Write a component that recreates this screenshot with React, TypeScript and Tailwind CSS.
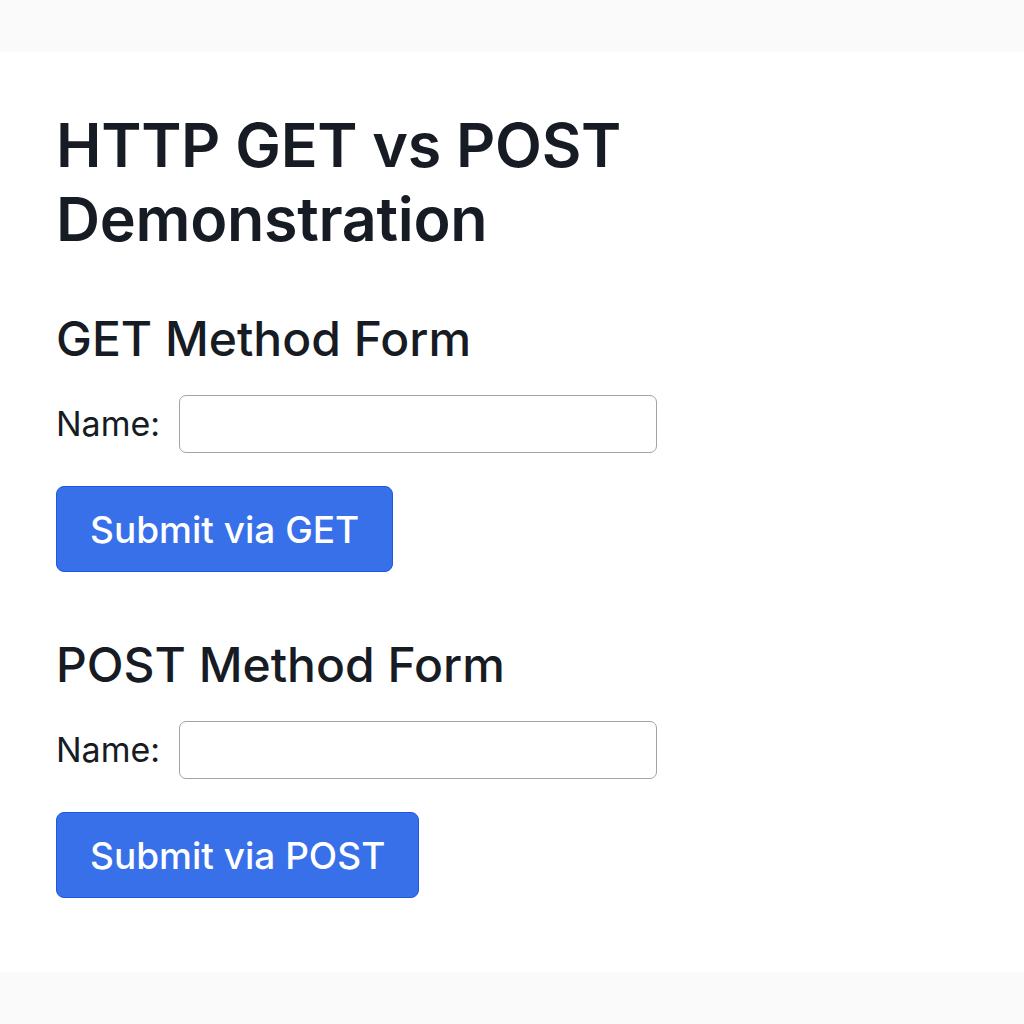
import React from "react";

function FormBlock({ title, button }: { title: string; button: string }) {
  return (
    <section className="flex flex-col">
      <h2 className="text-[48px] font-medium leading-[56px] text-[#161b24]">{title}</h2>
      <div className="mt-[28px] flex items-center gap-[19px]">
        <label className="text-[34px] leading-[40px] text-[#161b24]">Name:</label>
        <input
          type="text"
          className="h-[58px] w-[478px] rounded-[7px] border border-[#a3a3a3] bg-white px-3 outline-none"
        />
      </div>
      <div className="mt-[33px]">
        <button
          type="button"
          className="h-[86px] rounded-[8px] border border-[#1f56e6] bg-[#3870ea] px-[33px] text-[37px] font-medium leading-none text-white"
        >
          {button}
        </button>
      </div>
    </section>
  );
}

export default function App() {
  return (
    <div
      className="flex h-[1024px] w-[1024px] flex-col bg-white"
      style={{ fontFamily: "Inter, 'Noto Sans', 'Liberation Sans', sans-serif" }}
    >
      <div className="h-[52px] bg-[#fafafa]" />
      <main className="flex flex-1 flex-col px-14 pt-[56px]">
        <h1 className="w-[640px] text-[61px] font-semibold leading-[74px] tracking-[-0.3px] text-[#161b24]">
          HTTP GET vs POST Demonstration
        </h1>
        <div className="mt-[55px]">
          <FormBlock title="GET Method Form" button="Submit via GET" />
        </div>
        <div className="mt-[65px]">
          <FormBlock title="POST Method Form" button="Submit via POST" />
        </div>
      </main>
      <div className="h-[52px] bg-[#fafafa]" />
    </div>
  );
}
